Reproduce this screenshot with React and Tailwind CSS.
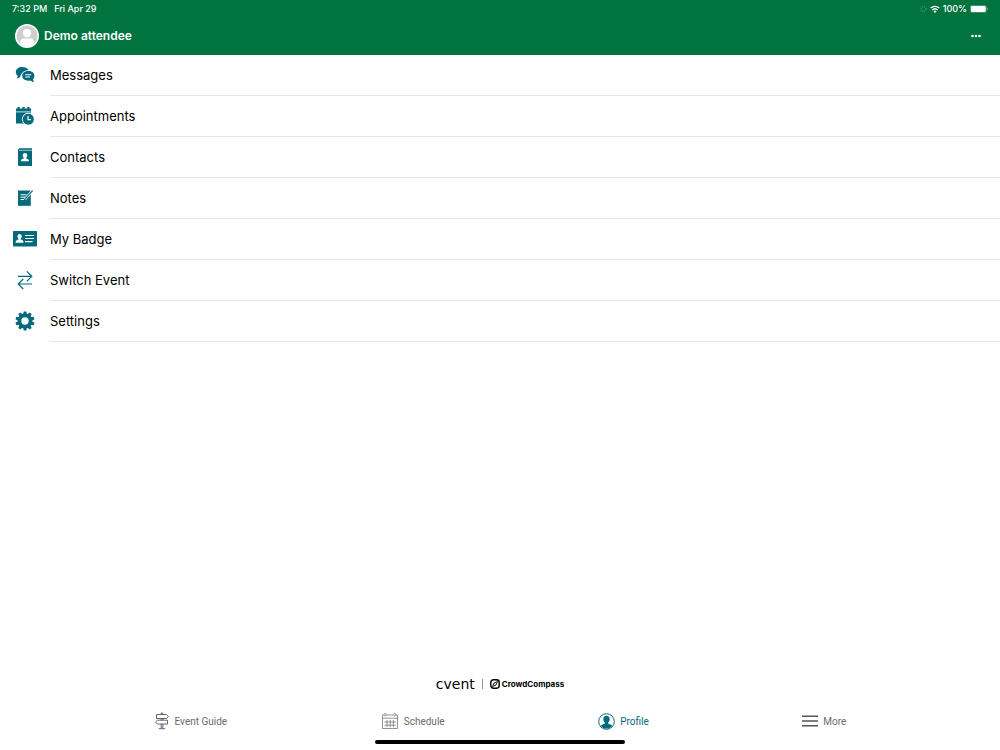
import React from "react";

function MessagesIcon() {
  return (
    <svg width="20" height="18" viewBox="0 0 20 18" aria-hidden="true">
      <path
        fill="#04697b"
        d="M7.200 1C3.500 1 .8 3.100.8 6c0 1.700.8 3 2 3.900-.1 1-.6 1.900-1.300 2.600 1.400 0 2.700-.5 3.700-1.400C6 7.300 8.800 4.400 13.500 4.100 12.500 2.200 10 1 7.200 1Z"
      />
      <path
        fill="#04697b"
        d="M13.300 5c-3.400 0-6.100 2-6.100 4.800s2.700 4.900 6.100 4.900c.8 0 1.500-.1 2.200-.3.9.9 2.100 1.500 3.600 1.600-.6-.8-1-1.700-1.100-2.700.8-.9 1.400-2.100 1.400-3.500C19.400 7 16.700 5 13.300 5Z"
      />
      <path stroke="#fff" strokeWidth="1.100" d="M10.300 8.700h6M10.300 11h4.600" />
    </svg>
  );
}

function AppointmentsIcon() {
  return (
    <svg width="20" height="20" viewBox="0 0 20 20" aria-hidden="true">
      <path fill="#04697b" d="M1 2.500h1.500V1h2.300v1.500h2.600V1h2.300v1.500h2.600V1h2.300v1.500H16v3H1Z" />
      <path fill="#04697b" d="M1 6.300h15v11.200H1Z" />
      <circle cx="13.300" cy="13.200" r="6" fill="#04697b" stroke="#fff" strokeWidth="1" />
      <path fill="none" stroke="#fff" strokeWidth="1.200" d="M13 10v3.700h3" />
    </svg>
  );
}

function ContactsIcon() {
  return (
    <svg width="16" height="18" viewBox="0 0 16 18" aria-hidden="true">
      <path fill="#04697b" d="M2.200.2H15V2H3v1h12v15H1.800L1 17.200V1.400Z" />
      <path fill="#7eb3bb" d="M2 1.700h13v1.300H2Z" />
      <path
        fill="#fff"
        d="M8 5c-1.500 0-2.300 1-2.300 2.300 0 1 .4 1.900 1.100 2.400v.8c-1.700.4-2.800.9-2.800 2.800h8c0-1.900-1.100-2.400-2.800-2.800v-.8c.7-.5 1.100-1.400 1.100-2.400C10.300 6 9.500 5 8 5Z"
      />
    </svg>
  );
}

function NotesIcon() {
  return (
    <svg width="18" height="18" viewBox="0 0 18 18" aria-hidden="true">
      <path fill="#04697b" d="M2 1.500h12.800v15.300H2Z" />
      <path stroke="#fff" strokeWidth="1" d="M4.500 5.800h6M4.500 8.200h4.500M4.500 10.500h3.500" />
      <path fill="none" stroke="#fff" strokeWidth="2.600" d="m8.800 10.400 7.100-8" />
      <path fill="none" stroke="#04697b" strokeWidth="1.200" d="m9.200 10 7.400-8.400" />
      <path fill="#04697b" d="m8 11.300.8-2 1.100 1Z" />
    </svg>
  );
}

function BadgeIcon() {
  return (
    <svg width="24" height="16" viewBox="0 0 24 16" aria-hidden="true">
      <rect width="24" height="15.500" rx=".8" fill="#04697b" />
      <path
        fill="#fff"
        d="M6.600 3C5.200 3 4.500 4 4.500 5.300c0 1 .4 1.900 1 2.400v.8c-1.600.4-2.900.9-2.900 3.200h8c0-2.300-1.300-2.800-2.900-3.200v-.8c.6-.5 1-1.400 1-2.400C8.700 4 8 3 6.600 3Z"
      />
      <path stroke="#fff" strokeWidth="1.100" d="M12 4.500h9M12 7.500h9M12 10.600h7.500" />
    </svg>
  );
}

function SwitchIcon() {
  return (
    <svg width="18" height="20" viewBox="0 0 18 20" aria-hidden="true">
      <path
        fill="none"
        stroke="#04697b"
        strokeWidth="1.200"
        d="M2 6.300h13.700M10.800 1.300l5 5-5 5M16 14H2.300M7.200 9l-5 5 5 5"
      />
    </svg>
  );
}

function SettingsIcon() {
  return (
    <svg width="20" height="20" viewBox="-10 -10 20 20" aria-hidden="true">
      <g fill="#04697b">
        {[0, 36, 72, 108, 144].map((a) => (
          <path key={a} transform={`rotate(${a})`} d="M-1.300-9.600h2.600L2-6v12L1.300 9.600h-2.600L-2 6V-6Z" />
        ))}
        <circle r="7.400" />
      </g>
      <circle r="3.700" fill="#fff" />
    </svg>
  );
}

function SignpostIcon() {
  return (
    <svg width="16" height="18" viewBox="0 0 16 18" fill="none" stroke="#666" strokeWidth="1" aria-hidden="true">
      <path d="M7.200 2.500V1h1.600v1.500M2.500 2.500h10L14.500 4.500l-2 2h-10ZM7.200 6.500v1.700M8.800 6.500v1.700M13.500 8.200h-10L1.500 10l2 2h10ZM7.200 12v4.500M8.800 12v4.500M4.800 16.700h6.400" />
    </svg>
  );
}

function CalendarIcon() {
  return (
    <svg width="18" height="18" viewBox="0 0 18 18" fill="none" stroke="#777" strokeWidth=".8" aria-hidden="true">
      <path d="M3 3H1.500v13.500h15V3H15M5.500 3h7M1.500 6.200h15" />
      <circle cx="4.200" cy="2.700" r="1.200" />
      <circle cx="13.800" cy="2.700" r="1.200" />
      <path d="M6 8v7.300M9.200 8v7.300M12.400 8v7.300M3.300 10h11.600M3.300 13.200h11.600" />
    </svg>
  );
}

function ProfileIcon() {
  return (
    <svg width="17" height="17" viewBox="0 0 17 17" aria-hidden="true">
      <circle cx="8.500" cy="8.500" r="7.800" fill="#fff" stroke="#04697b" strokeWidth="1" />
      <path
        fill="#04697b"
        d="M8.500 2.700c-2.100 0-3.200 1.400-3.200 3.300 0 1.500.6 2.800 1.500 3.500v1.200c-1.600.4-3.100.8-3.900 2.200 1.300 1.600 3.300 2.700 5.600 2.700s4.300-1.100 5.600-2.700c-.8-1.400-2.300-1.800-3.900-2.200V9.500c.9-.7 1.500-2 1.500-3.500 0-1.900-1.100-3.300-3.200-3.300Z"
      />
    </svg>
  );
}

function MoreIcon() {
  return (
    <svg width="16" height="12" viewBox="0 0 16 12" aria-hidden="true">
      <path stroke="#555" strokeWidth="1.500" d="M0 1.200h16M0 6h16M0 10.800h16" />
    </svg>
  );
}

const menu = [
  ["Messages", MessagesIcon],
  ["Appointments", AppointmentsIcon],
  ["Contacts", ContactsIcon],
  ["Notes", NotesIcon],
  ["My Badge", BadgeIcon],
  ["Switch Event", SwitchIcon],
  ["Settings", SettingsIcon],
];

const tabs = [
  ["Event Guide", SignpostIcon],
  ["Schedule", CalendarIcon],
  ["Profile", ProfileIcon],
  ["More", MoreIcon],
];

function StatusBar() {
  return (
    <div className="flex h-[18px] items-center justify-between px-3 text-[9px] font-medium">
      <div className="flex gap-[7px]">
        <span>7:32 PM</span>
        <span>Fri Apr 29</span>
      </div>
      <div className="flex items-center gap-[3px]">
        <svg width="7" height="8" viewBox="0 0 7 8" aria-hidden="true">
          <circle cx="3.500" cy="4" r="2.500" fill="none" stroke="#4a9c72" strokeWidth="1.300" strokeDasharray="1 1" />
        </svg>
        <svg width="10" height="8" viewBox="0 0 10 8" fill="none" stroke="#fff" strokeWidth="1.300" aria-hidden="true">
          <path d="M.6 3.100a6.300 6.300 0 0 1 8.800 0M2.300 5a3.900 3.900 0 0 1 5.400 0" />
          <path fill="#fff" stroke="none" d="M5 7.900 3.500 6.300a2.200 2.200 0 0 1 3 0Z" />
        </svg>
        <span>100%</span>
        <svg width="18" height="8" viewBox="0 0 18 8" aria-hidden="true">
          <rect x=".3" y=".3" width="16" height="7.400" rx="2" fill="none" stroke="#80b99b" strokeWidth=".6" />
          <rect x=".9" y=".9" width="14.800" height="6.200" rx="1.400" fill="#fff" />
          <path fill="#80b99b" d="M17 2.800c1 .3 1 2.100 0 2.400Z" />
        </svg>
      </div>
    </div>
  );
}

export default function App() {
  return (
    <div className="flex min-h-screen flex-col bg-white font-['Inter','Liberation_Sans',sans-serif] text-black">
      <header className="bg-[#00733f] pb-px text-white">
        <StatusBar />
        <div className="flex h-9 items-center justify-between px-[15px]">
          <div className="flex items-center gap-[5px]">
            <svg width="24" height="24" viewBox="0 0 24 24" aria-hidden="true">
              <circle cx="12" cy="12" r="12" fill="#fff" />
              <circle cx="12" cy="12" r="10.500" fill="#cfcfcf" />
              <circle cx="12" cy="9" r="4.200" fill="#fff" />
              <path fill="#fff" d="M4.800 19.600c0-3.700 1.700-5.200 4.200-5.200h6c2.500 0 4.200 1.500 4.200 5.200A10.500 10.500 0 0 1 4.800 19.600Z" />
            </svg>
            <h1 className="text-[12px] font-semibold">Demo attendee</h1>
          </div>
          <button type="button" aria-label="More options" className="p-1">
            <svg width="10" height="4" viewBox="0 0 10 4" fill="#fff" aria-hidden="true">
              <circle cx="1.500" cy="2" r="1.300" />
              <circle cx="5" cy="2" r="1.300" />
              <circle cx="8.500" cy="2" r="1.300" />
            </svg>
          </button>
        </div>
      </header>

      <main className="flex-1">
        <ul>
          {menu.map(([label, Icon]) => (
            <li key={label}>
              <a href="#" className="flex h-[41px] items-stretch text-[13px]">
                <span className="flex w-[50px] items-center justify-center pb-[2px]">
                  <Icon />
                </span>
                <span className="flex flex-1 items-center border-b border-[#e6e6e8] pt-px">{label}</span>
              </a>
            </li>
          ))}
        </ul>
      </main>

      <footer>
        <div className="flex h-6 items-center justify-center gap-[7px]">
          <span className="font-['DejaVu_Sans',sans-serif] text-[14px] leading-none">cvent</span>
          <span className="h-[10px] w-px bg-[#999]" />
          <span className="flex items-center gap-[2px]">
            <svg width="10" height="10" viewBox="0 0 10 10" fill="none" stroke="#000" aria-hidden="true">
              <rect x=".8" y=".8" width="8.400" height="8.400" rx="2.600" strokeWidth="1.400" />
              <path strokeWidth=".9" d="M7.500 2.500 6 6 2.500 7.500 4 4Z" />
            </svg>
            <span className="text-[8px] font-bold">CrowdCompass</span>
          </span>
        </div>
        <nav className="mt-3 flex h-[26px] items-center justify-evenly font-['Roboto','Liberation_Sans',sans-serif] text-[10px] text-[#6b6b6b]">
          {tabs.map(([label, Icon]) => (
            <a
              key={label}
              href="#"
              aria-current={label === "Profile" ? "page" : undefined}
              className="flex items-center gap-[5px] aria-[current=page]:text-[#04697b]"
            >
              <Icon />
              <span>{label}</span>
            </a>
          ))}
        </nav>
        <div className="mx-auto mt-[6px] mb-[6px] h-1 w-1/4 rounded-full bg-black" />
      </footer>
    </div>
  );
}
